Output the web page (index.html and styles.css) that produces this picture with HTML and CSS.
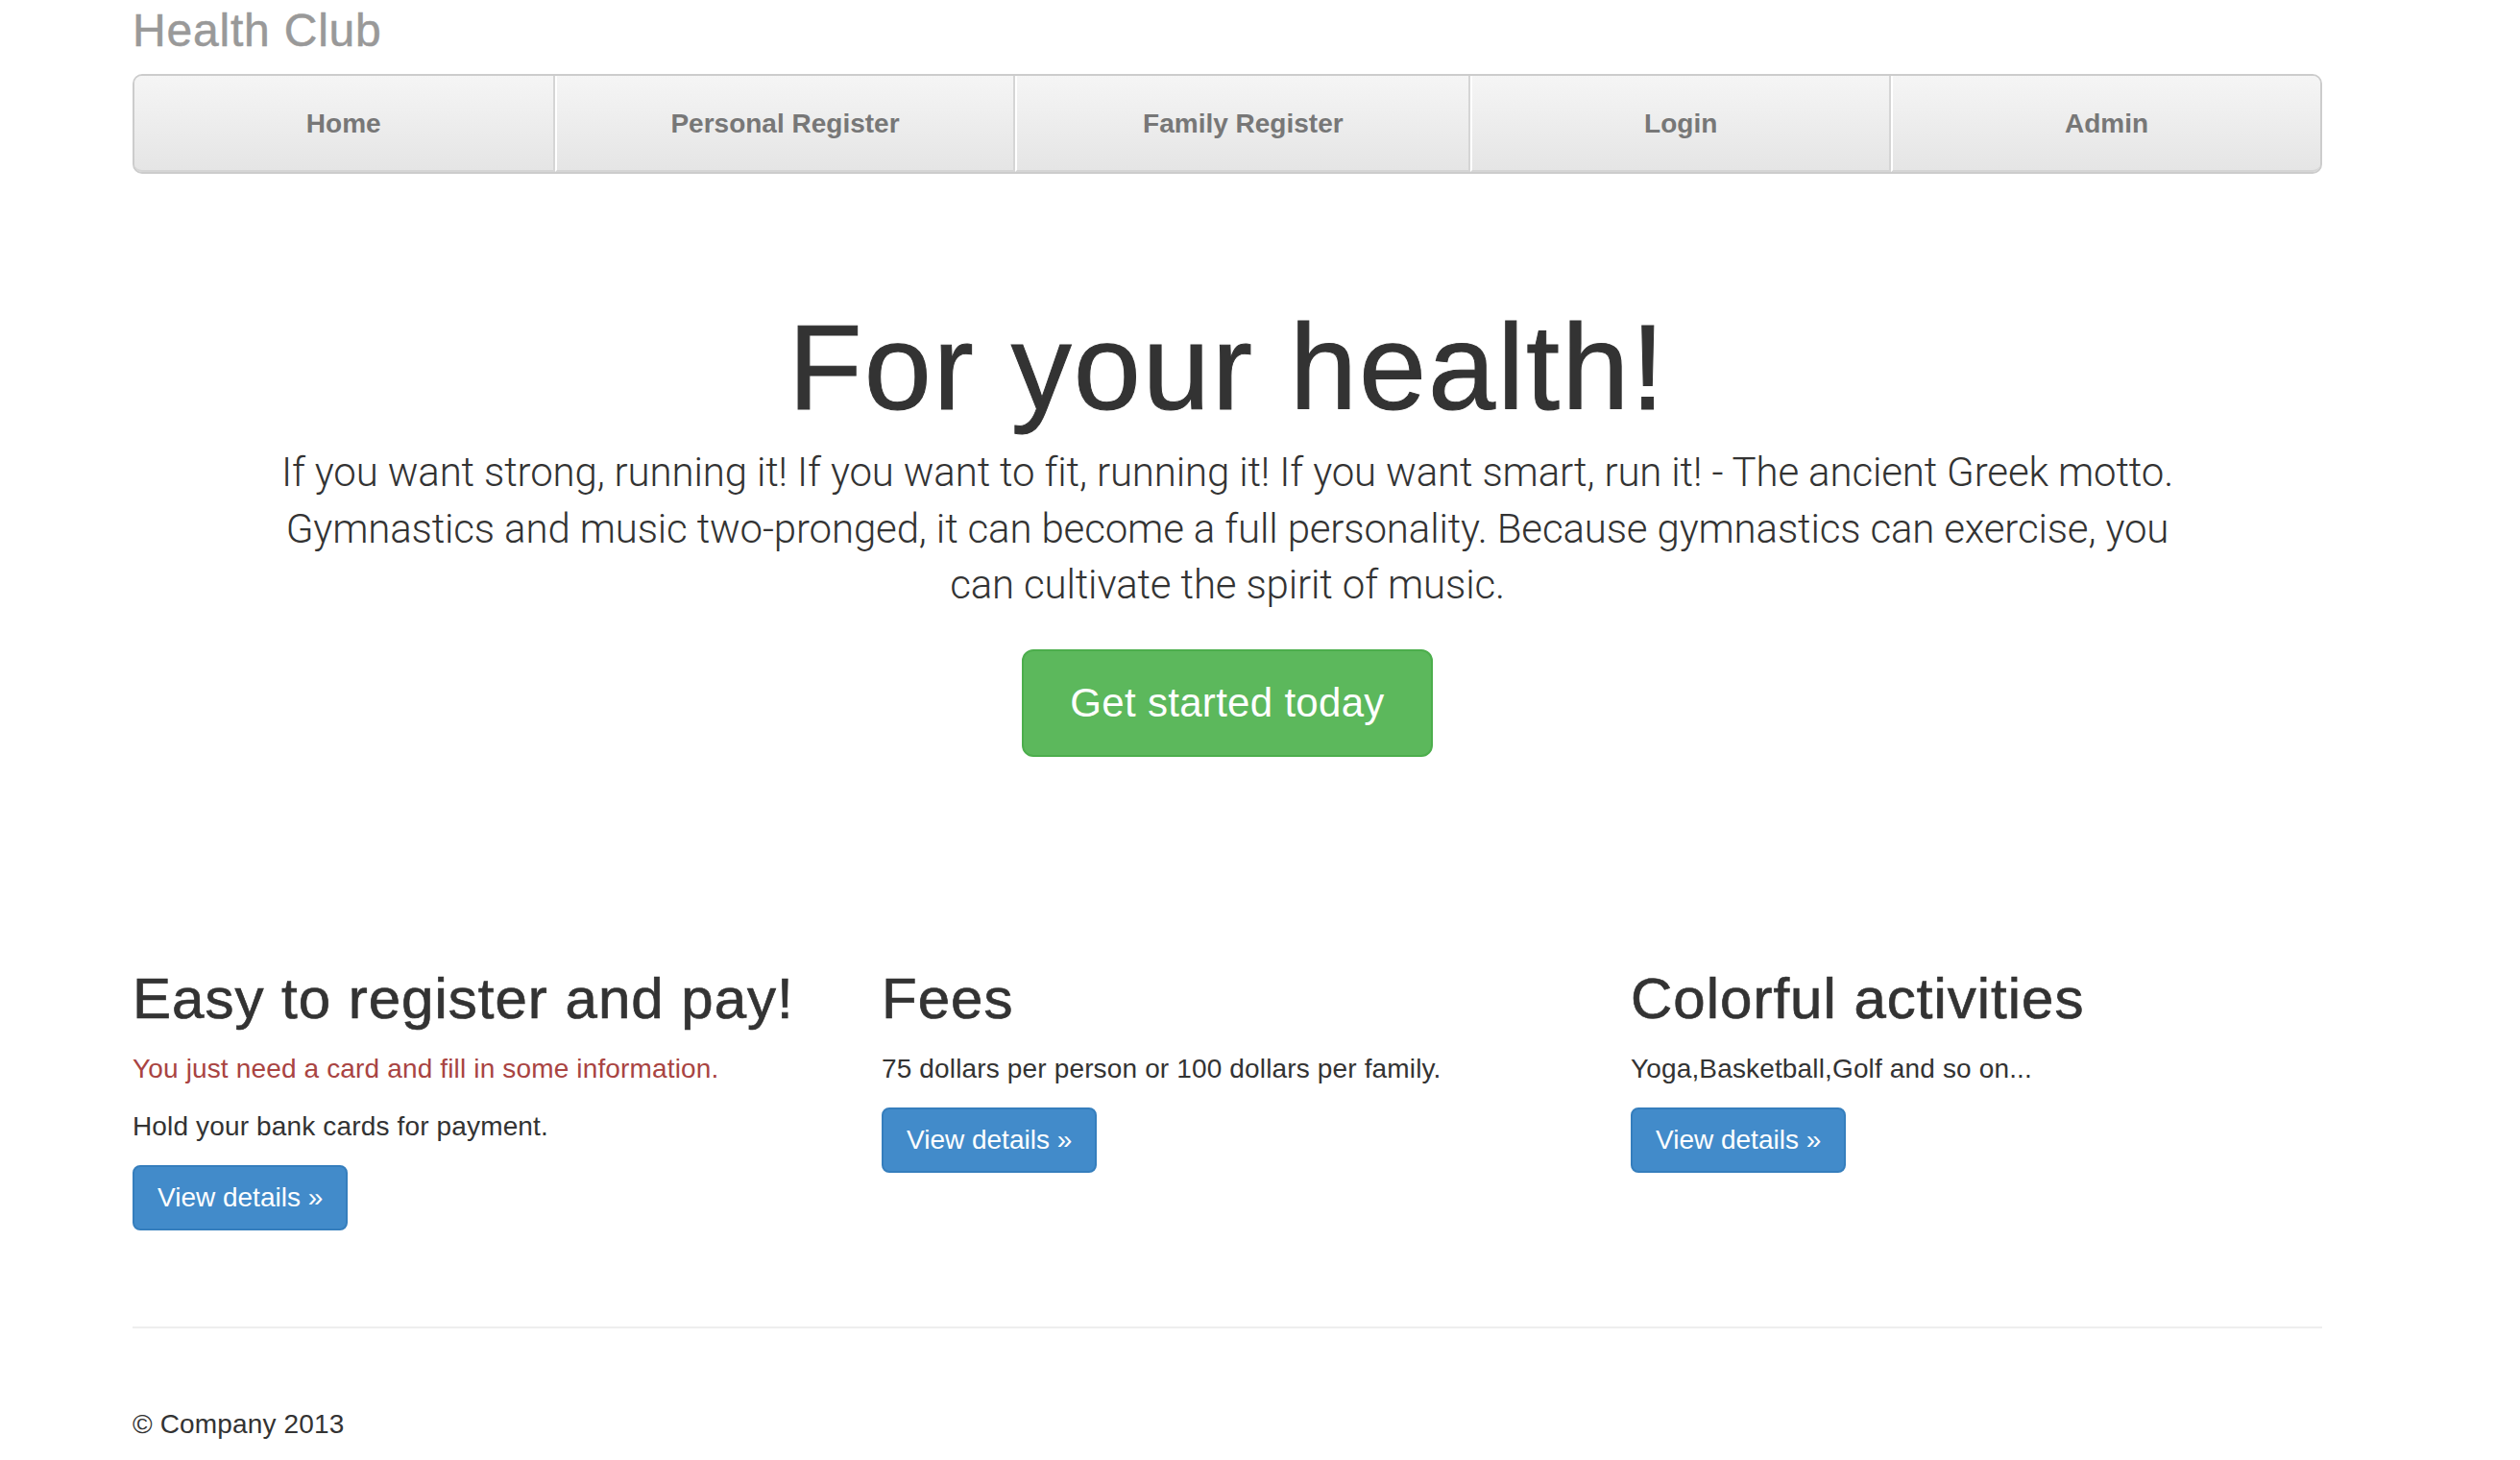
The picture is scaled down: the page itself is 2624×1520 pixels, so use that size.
FILE: index.html
```html
<!DOCTYPE html>
<html lang="en">
<head>
<meta charset="utf-8">
<title>Health Club</title>
<link rel="stylesheet" href="styles.css">
</head>
<body>
<div class="container">
  <div class="masthead">
    <h3 class="brand">Health Club</h3>
    <ul class="nav">
      <li><a href="#">Home</a></li>
      <li><a href="#">Personal Register</a></li>
      <li><a href="#">Family Register</a></li>
      <li><a href="#">Login</a></li>
      <li><a href="#">Admin</a></li>
    </ul>
  </div>

  <div class="jumbotron">
    <h1 class="hero-title">For your health!</h1>
    <p class="lead">If you want strong, running it! If you want to fit, running it! If you want smart, run it! - The ancient Greek motto. Gymnastics and music two-pronged, it can become a full personality. Because gymnastics can exercise, you can cultivate the spirit of music.</p>
    <div class="cta"><a class="btn-success" href="#">Get started today</a></div>
  </div>

  <div class="features">
    <div class="feature">
      <h2>Easy to register and pay!</h2>
      <p class="text-danger">You just need a card and fill in some information.</p>
      <p>Hold your bank cards for payment.</p>
      <p><a class="btn-primary" href="#">View details &raquo;</a></p>
    </div>
    <div class="feature">
      <h2>Fees</h2>
      <p>75 dollars per person or 100 dollars per family.</p>
      <p><a class="btn-primary" href="#">View details &raquo;</a></p>
    </div>
    <div class="feature">
      <h2>Colorful activities</h2>
      <p>Yoga,Basketball,Golf and so on...</p>
      <p><a class="btn-primary" href="#">View details &raquo;</a></p>
    </div>
  </div>

  <div class="footer">
    <p>&copy; Company 2013</p>
  </div>
</div>
</body>
</html>
```
FILE: styles.css
```css
* {
  box-sizing: border-box;
}

html, body {
  margin: 0;
  padding: 0;
  background: #fff;
}

body {
  font-family: "Liberation Sans", Arial, Helvetica, sans-serif;
  font-size: 28px;
  line-height: 40px;
  letter-spacing: 0.15px;
  color: #333;
}

a {
  text-decoration: none;
}

.container {
  width: 2280px;
  margin-left: 138px;
  padding-top: 6px;
}

/* Masthead */
.brand {
  margin: 0 0 18px;
  font-size: 48px;
  line-height: 52.8px;
  font-weight: 400;
  letter-spacing: 0.8px;
  -webkit-text-stroke: 0.5px #999;
  color: #999;
}

.nav {
  display: table;
  width: 100%;
  margin: 0;
  padding: 0;
  list-style: none;
  background-color: #eee;
  border: 2px solid #ccc;
  border-radius: 10px;
  max-height: 104px;
}

.nav > li {
  display: table-cell;
  width: 1%;
}

.nav > li > a {
  display: block;
  padding: 30px 30px 28px;
  font-size: 28px;
  line-height: 40px;
  font-weight: 700;
  letter-spacing: 0;
  color: #777;
  text-align: center;
  background-image: linear-gradient(to bottom, #f5f5f5 0%, #e5e5e5 100%);
  border-bottom: 2px solid #d5d5d5;
  border-right: 2px solid #d5d5d5;
  border-left: 2px solid #fff;
}

.nav > li:first-child > a {
  border-left: 0;
  border-radius: 8px 0 0 8px;
}

.nav > li:last-child > a {
  border-right: 0;
  border-radius: 0 8px 8px 0;
}

/* Jumbotron */
.jumbotron {
  text-align: center;
  padding: 99px 120px 96px;
  margin-bottom: 63px;
}

.hero-title {
  margin: 40px 0 17px;
  font-size: 126px;
  line-height: 126px;
  font-weight: 400;
  letter-spacing: 2px;
  -webkit-text-stroke: 1px #333;
  color: #333;
}

.lead {
  max-width: 2000px;
  margin: 0 auto 37px;
  font-family: Roboto, "Liberation Sans", sans-serif;
  font-weight: 300;
  font-size: 42px;
  line-height: 58.8px;
  letter-spacing: -0.15px;
  color: #333;
}

.cta {
  margin: 0 0 20px;
}

.btn-success {
  display: inline-block;
  vertical-align: top;
  padding: 28px 48px;
  font-size: 42px;
  line-height: 52px;
  letter-spacing: 0.3px;
  color: #fff;
  background-color: #5cb85c;
  border: 2px solid #4cae4c;
  border-radius: 12px;
}

/* Features */
.features {
  display: grid;
  grid-template-columns: repeat(3, 1fr);
  column-gap: 60px;
}

.feature h2 {
  margin: 40px 0 20px;
  font-size: 60px;
  line-height: 66px;
  font-weight: 400;
  letter-spacing: 1px;
  -webkit-text-stroke: 0.7px #333;
  color: #333;
}

.feature p {
  margin: 0 0 20px;
}

.text-danger {
  color: #a94442;
}

.btn-primary {
  display: inline-block;
  vertical-align: top;
  padding: 12px 24px;
  font-size: 28px;
  line-height: 40px;
  letter-spacing: 0;
  color: #fff;
  background-color: #428bca;
  border: 2px solid #357ebd;
  border-radius: 8px;
}

/* Footer */
.footer {
  margin-top: 80px;
  padding: 80px 0 0;
  border-top: 2px solid #eee;
}

.footer p {
  margin: 0;
}
```
